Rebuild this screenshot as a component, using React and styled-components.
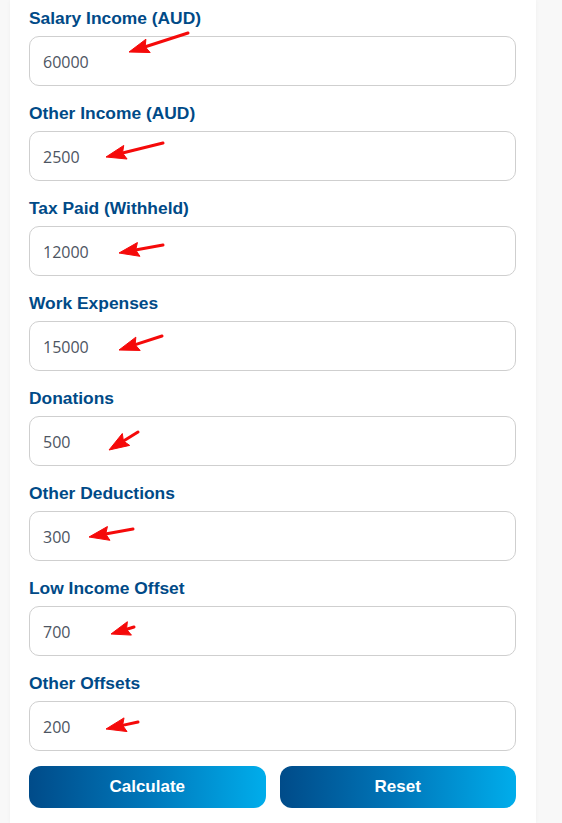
import React from 'react';
import styled, { createGlobalStyle } from 'styled-components';

const GlobalStyle = createGlobalStyle`
  html, body {
    margin: 0;
    padding: 0;
    background: #f8f8f8;
  }
  * {
    box-sizing: border-box;
  }
`;

const Page = styled.div`
  position: relative;
  width: 562px;
  height: 823px;
  overflow: hidden;
`;

const Card = styled.form`
  margin-left: 10px;
  width: 526px;
  min-height: 823px;
  background: #ffffff;
  padding: 8px 20px 0 19px;
  box-shadow: 0 0 4px rgba(0, 0, 0, 0.04);
`;

const Field = styled.div`
  display: flex;
  flex-direction: column;
  margin-bottom: ${p => (p.$last ? '15px' : '17px')};
`;

const Label = styled.label`
  font-family: "Liberation Sans", Arial, sans-serif;
  font-weight: 700;
  font-size: 17.4px;
  line-height: 20px;
  color: #004a87;
  margin-bottom: 8px;
`;

const Input = styled.input`
  height: 50px;
  width: 100%;
  border: 1px solid #cfcfcf;
  border-radius: 10px;
  padding: 1px 13px 0;
  font-family: "Open Sans", sans-serif;
  font-size: 16px;
  color: #4d5562;
  background: #fff;
  outline: none;
`;

const Actions = styled.div`
  display: grid;
  grid-template-columns: 1fr 1fr;
  gap: 14px;
`;

const Button = styled.button`
  height: 42px;
  border: none;
  border-radius: 12px;
  background: linear-gradient(90deg, #004b89 0%, #0077ba 50%, #00adeb 100%);
  color: #fff;
  font-family: "Liberation Sans", Arial, sans-serif;
  font-weight: 700;
  font-size: 17px;
  cursor: pointer;
`;

const Overlay = styled.svg`
  position: absolute;
  top: 0;
  left: 0;
  pointer-events: none;
`;

const fields = [
  { label: 'Salary Income (AUD)', value: '60000' },
  { label: 'Other Income (AUD)', value: '2500' },
  { label: 'Tax Paid (Withheld)', value: '12000' },
  { label: 'Work Expenses', value: '15000' },
  { label: 'Donations', value: '500' },
  { label: 'Other Deductions', value: '300' },
  { label: 'Low Income Offset', value: '700' },
  { label: 'Other Offsets', value: '200' },
];

// tail -> tip of the red annotation arrows
const arrows = [
  [188, 33, 129, 52],
  [163, 143, 106, 157],
  [163, 245, 119, 253],
  [162, 336, 119, 350],
  [138, 432, 109, 450],
  [133, 529, 89, 537],
  [134, 627, 111, 634],
  [138, 722, 106, 729],
];

const Arrow = ({ x1, y1, x2, y2 }) => {
  const dx = x2 - x1;
  const dy = y2 - y1;
  const len = Math.hypot(dx, dy);
  const ux = dx / len;
  const uy = dy / len;
  const head = Math.min(20, len * 0.8);
  const bx = x2 - ux * head;
  const by = y2 - uy * head;
  const w = 7;
  const pts = [
    [x2, y2],
    [bx - uy * w, by + ux * w],
    [bx + ux * 3, by + uy * 3],
    [bx + uy * w, by - ux * w],
  ].map(p => p.join(',')).join(' ');
  return (
    <g fill="#f50a0a" stroke="#f50a0a">
      <line x1={x1} y1={y1} x2={bx + ux * 2} y2={by + uy * 2} strokeWidth="3" strokeLinecap="round" />
      <polygon points={pts} strokeWidth="1" strokeLinejoin="round" />
    </g>
  );
};

export default function App() {
  return (
    <Page>
      <GlobalStyle />
      <Card onSubmit={e => e.preventDefault()}>
        {fields.map((f, i) => (
          <Field key={f.label} $last={i === fields.length - 1}>
            <Label>{f.label}</Label>
            <Input type="text" defaultValue={f.value} />
          </Field>
        ))}
        <Actions>
          <Button type="submit">Calculate</Button>
          <Button type="reset">Reset</Button>
        </Actions>
      </Card>
      <Overlay width="562" height="823" viewBox="0 0 562 823">
        {arrows.map(([x1, y1, x2, y2], i) => (
          <Arrow key={i} x1={x1} y1={y1} x2={x2} y2={y2} />
        ))}
      </Overlay>
    </Page>
  );
}
